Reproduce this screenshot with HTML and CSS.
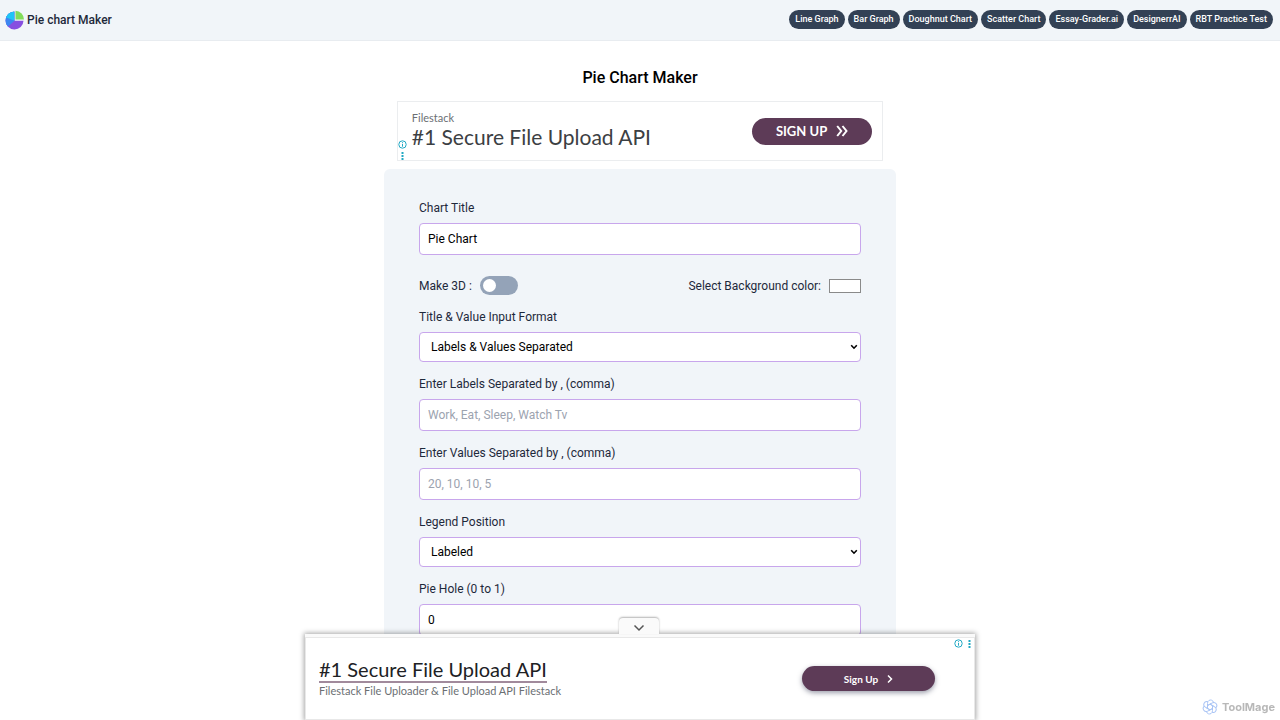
FILE: index.html
```html
<!DOCTYPE html>
<html lang="en">
<head>
<meta charset="utf-8">
<meta name="viewport" content="width=device-width, initial-scale=1">
<title>Pie Chart Maker</title>
<link rel="stylesheet" href="styles.css">
</head>
<body>
<header class="topbar">
  <a class="brand" href="#">
    <svg class="brand-logo" viewBox="0 0 20 20" aria-hidden="true">
      <defs>
        <clipPath id="disc"><path d="M9.500 1.500A9 9 0 1 0 18.500 10.800H9.500Z"/></clipPath>
      </defs>
      <g clip-path="url(#disc)">
        <rect width="20" height="20" fill="#874fe0"/>
        <path d="M9.500 10.800L2 17.500H0V0h9.500Z" fill="#3c86f0"/>
        <path d="M9.500 10.800L0 7V0h9.500Z" fill="#1fc4f5"/>
      </g>
      <path d="M10.500 0.800A8.600 8.600 0 0 1 19 9.500H10.500Z" fill="#82dc5a"/>
    </svg>
    <span>Pie chart Maker</span>
  </a>
  <nav class="links">
    <a href="#">Line Graph</a>
    <a href="#">Bar Graph</a>
    <a href="#">Doughnut Chart</a>
    <a href="#">Scatter Chart</a>
    <a href="#">Essay-Grader.ai</a>
    <a href="#">DesignerrAI</a>
    <a href="#">RBT Practice Test</a>
  </nav>
</header>

<main class="page">
  <h1 class="title">Pie Chart Maker</h1>

  <aside class="banner">
    <div class="banner-marks">
      <svg class="mark-info" viewBox="0 0 9 9" aria-hidden="true"><circle cx="4.500" cy="4.500" r="3.700"/><path d="M4.500 4v2.700M4.500 2.200v1"/></svg>
      <svg class="mark-dots" viewBox="0 0 3 9" aria-hidden="true"><path d="M.5 1h2v2h-2zM.5 4h2v2h-2zM.5 7h2v2h-2z"/></svg>
    </div>
    <div class="banner-copy">
      <span class="banner-brand">Filestack</span>
      <a class="banner-head" href="#">#1 Secure File Upload API</a>
    </div>
    <button class="banner-cta" type="button">SIGN UP
      <svg class="cta-chevrons" viewBox="0 0 12 12" aria-hidden="true"><path d="M1.200 1l4 5-4 5M6.500 1l4 5-4 5"/></svg>
    </button>
  </aside>

  <form class="form">
    <div class="field">
      <label for="chart-title">Chart Title</label>
      <input class="box" id="chart-title" type="text" value="Pie Chart">
    </div>
    <div class="options">
      <label class="option" for="make-3d">Make 3D :
        <input class="switch" id="make-3d" type="checkbox">
      </label>
      <label class="option" for="bg-color">Select Background color:
        <input class="swatch" id="bg-color" type="color" value="#ffffff">
      </label>
    </div>
    <div class="field">
      <label for="format">Title &amp; Value Input Format</label>
      <select class="box" id="format"><option>Labels &amp; Values Separated</option></select>
    </div>
    <div class="field">
      <label for="labels">Enter Labels Separated by , (comma)</label>
      <input class="box" id="labels" type="text" placeholder="Work, Eat, Sleep, Watch Tv">
    </div>
    <div class="field">
      <label for="values">Enter Values Separated by , (comma)</label>
      <input class="box" id="values" type="text" placeholder="20, 10, 10, 5">
    </div>
    <div class="field">
      <label for="legend">Legend Position</label>
      <select class="box" id="legend"><option>Labeled</option></select>
    </div>
    <div class="field">
      <label for="hole">Pie Hole (0 to 1)</label>
      <input class="box" id="hole" type="text" value="0">
    </div>
  </form>
</main>

<aside class="anchor">
  <button class="anchor-toggle" type="button" aria-label="Collapse">
    <svg viewBox="0 0 12 8" aria-hidden="true"><path d="M1.500 1.500L6 6l4.500-4.500"/></svg>
  </button>
  <div class="anchor-body">
    <div class="anchor-copy">
      <a class="anchor-head" href="#">#1 Secure File Upload API</a>
      <span class="anchor-sub">Filestack File Uploader &amp; File Upload API Filestack</span>
    </div>
    <button class="anchor-cta" type="button">Sign Up
      <svg viewBox="0 0 6 10" aria-hidden="true"><path d="M1 1.500L4.500 5 1 8.500"/></svg>
    </button>
    <div class="anchor-marks">
      <svg class="mark-info" viewBox="0 0 9 9" aria-hidden="true"><circle cx="4.500" cy="4.500" r="3.700"/><path d="M4.500 4v2.700M4.500 2.200v1"/></svg>
      <svg class="mark-dots" viewBox="0 0 3 9" aria-hidden="true"><path d="M.5 1h2v2h-2zM.5 4h2v2h-2zM.5 7h2v2h-2z"/></svg>
    </div>
  </div>
</aside>

<div class="watermark">
  <svg viewBox="0 0 16 16" aria-hidden="true">
    <path id="petal" d="M5.500 9.500V4.500C5.500 0 11 0 11.500 3.500M5.500 6.500L9 4.500"/>
    <use href="#petal" transform="rotate(60 8 8)"/>
    <use href="#petal" transform="rotate(120 8 8)"/>
    <use href="#petal" transform="rotate(180 8 8)"/>
    <use href="#petal" transform="rotate(240 8 8)"/>
    <use href="#petal" transform="rotate(300 8 8)"/>
  </svg>
  <span>ToolMage</span>
</div>
</body>
</html>
```

FILE: styles.css
```css
*, *::before, *::after { box-sizing: border-box; }

body {
  margin: 0;
  background: #fff;
  color: #1e293b;
  font: 12px/20px Roboto, "Liberation Sans", sans-serif;
}

a { color: inherit; text-decoration: none; }
button, input, select { font: inherit; }
button { border: 0; cursor: pointer; }

.topbar {
  display: flex;
  align-items: center;
  justify-content: space-between;
  min-height: 41px;
  padding: 0 7px 1px 5px;
  background: #f1f5f9;
  border-bottom: 1px solid #e8ecf0;
}

.brand {
  display: flex;
  align-items: center;
  gap: 2px;
  font-weight: 500;
}
.brand-logo { width: 20px; height: 20px; }

.links { display: flex; gap: 3px; }
.links a {
  padding: 0 6px;
  border-radius: 10px;
  background: #334155;
  color: #fff;
  font-size: 9px;
  font-weight: 500;
  line-height: 19px;
}

.page {
  display: flex;
  flex-direction: column;
  align-items: center;
  padding-top: 27px;
}

.title {
  margin: 0 0 13px;
  color: #000;
  font-size: 16px;
  font-weight: 500;
  line-height: 20px;
}

.banner {
  display: flex;
  align-items: center;
  width: 38%;
  min-width: 440px;
  min-height: 60px;
  margin-bottom: 8px;
  padding-right: 10px;
  border: 1px solid #ebedef;
  font-family: Lato, sans-serif;
}
.banner-marks {
  display: flex;
  flex-direction: column;
  align-items: center;
  align-self: flex-end;
  gap: 2px;
  width: 10px;
}
.mark-info { width: 9px; height: 9px; fill: none; stroke: #22a9c4; stroke-width: 1; }
.mark-dots { width: 3px; height: 9px; fill: #22a9c4; }
.banner-copy {
  display: flex;
  flex-direction: column;
  flex: 1;
  padding: 0 0 2px 4px;
}
.banner-brand { color: #6b6f73; font-size: 11px; line-height: 14px; }
.banner-head { color: #3c4043; font-size: 21px; line-height: 24px; }
.banner-cta {
  display: flex;
  align-items: center;
  gap: 9px;
  height: 27px;
  padding: 0 24px;
  border-radius: 14px;
  background: #5d3b57;
  color: #fff;
  font-size: 13px;
  font-weight: 700;
}
.cta-chevrons { width: 12px; height: 12px; fill: none; stroke: #fff; stroke-width: 2; }

.form {
  display: flex;
  flex-direction: column;
  gap: 12px;
  width: 40%;
  min-width: 460px;
  padding: 29px 35px 35px;
  border-radius: 6px;
  background: #f1f5f9;
}
.field { display: flex; flex-direction: column; gap: 5px; }
.box {
  width: 100%;
  height: 32px;
  padding: 0 8px;
  border: 1px solid #c8a6ec;
  border-radius: 4px;
  background: #fff;
  color: #000;
  outline: 0;
}
.box::placeholder { color: #9ca3af; opacity: 1; }
select.box {
  height: 30px;
  padding: 0 20px 0 11px;
  appearance: none;
  background: #fff url("data:image/svg+xml,%3Csvg xmlns='http://www.w3.org/2000/svg' viewBox='0 0 8 6'%3E%3Cpath d='M1.200 1.200L4 4.200l2.800-3' fill='none' stroke='%23000' stroke-width='1.600'/%3E%3C/svg%3E") no-repeat right 2px center / 8px 6px;
}

.options {
  display: flex;
  align-items: center;
  justify-content: space-between;
  height: 19px;
  margin-top: 9px;
}
.option { display: flex; align-items: center; gap: 8px; }
.switch {
  display: flex;
  align-items: center;
  width: 38px;
  height: 19px;
  margin: 0;
  padding: 0 3px;
  border-radius: 10px;
  background: #94a3b8;
  appearance: none;
}
.switch::before {
  content: "";
  width: 13px;
  height: 13px;
  border-radius: 50%;
  background: #fff;
}
.switch:checked { justify-content: flex-end; background: #a855f7; }
.swatch {
  width: 32px;
  height: 14px;
  padding: 0;
  border: 1px solid #8a8a8a;
  background: #fff;
  appearance: none;
}
.swatch::-webkit-color-swatch-wrapper { padding: 0; }
.swatch::-webkit-color-swatch { border: 0; }

.anchor {
  position: fixed;
  right: 0;
  bottom: 0;
  left: 0;
  width: 670px;
  max-width: 100%;
  margin: 0 auto;
  background: #fafafa;
  box-shadow: 0 0 5px 1px rgba(0, 0, 0, 0.35);
  font-family: Lato, sans-serif;
}
.anchor-toggle {
  position: absolute;
  bottom: 100%;
  left: 50%;
  display: grid;
  place-items: center;
  width: 40px;
  height: 16px;
  margin-left: -21px;
  padding: 3px 0 0;
  border-radius: 4px 4px 0 0;
  background: #fafafa;
  box-shadow: 0 -1px 2px rgba(0, 0, 0, 0.3);
}
.anchor-toggle svg { width: 12px; height: 8px; fill: none; stroke: #555; stroke-width: 1.500; }
.anchor-body {
  display: flex;
  align-items: center;
  justify-content: space-between;
  min-height: 83px;
  margin-top: 3px;
  padding: 0 39px 0 13px;
  border: 1px solid #e8e8e8;
  background: #fff;
}
.anchor-copy { display: flex; flex-direction: column; align-items: flex-start; }
.anchor-head {
  border-bottom: 2px solid #a18a9c;
  color: #202124;
  font-size: 20px;
  line-height: 23px;
}
.anchor-sub { color: #6b6f73; font-size: 11px; line-height: 16px; }
.anchor-cta {
  display: flex;
  align-items: center;
  justify-content: center;
  gap: 9px;
  width: 133px;
  height: 25px;
  border-radius: 13px;
  background: #5d3b57;
  box-shadow: 0 2px 5px rgba(60, 64, 90, 0.5);
  color: #fff;
  font-size: 10px;
  font-weight: 700;
}
.anchor-cta svg { width: 6px; height: 10px; fill: none; stroke: #fff; stroke-width: 1.500; }
.anchor-marks { position: absolute; top: 5px; right: 4px; display: flex; gap: 5px; }

.watermark {
  position: fixed;
  right: 5px;
  bottom: 4px;
  display: flex;
  align-items: center;
  gap: 4px;
  color: #b8b8b8;
  font: 700 11px/18px Inter, sans-serif;
}
.watermark svg { width: 16px; height: 16px; fill: none; stroke: #a9c4f5; stroke-width: 1; }
```
